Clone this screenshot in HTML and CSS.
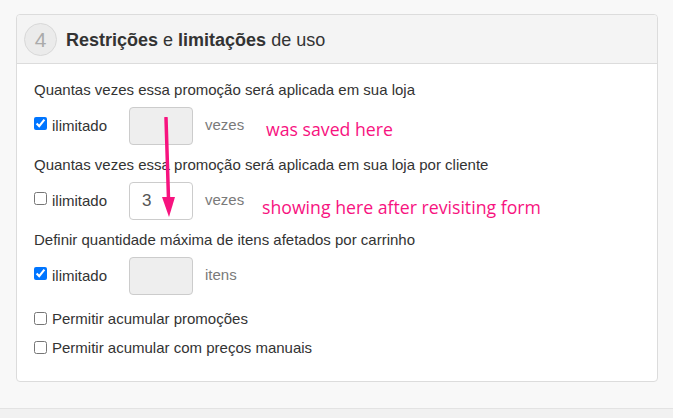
FILE: index.html
```html
<!DOCTYPE html>
<html lang="pt">
<head>
<meta charset="utf-8">
<link rel="stylesheet" href="styles.css">
</head>
<body>
<div class="page">
  <section class="card">
    <header class="card-head">
      <span class="step">4</span>
      <h2 class="title"><b>Restrições</b> e <b>limitações</b> de uso</h2>
    </header>
    <div class="card-body">
      <p class="label">Quantas vezes essa promoção será aplicada em sua loja</p>
      <div class="row">
        <label class="check"><input type="checkbox" checked> ilimitado</label>
        <input class="num" type="text" disabled>
        <span class="unit">vezes</span>
      </div>
      <p class="label">Quantas vezes essa promoção será aplicada em sua loja por cliente</p>
      <div class="row">
        <label class="check"><input type="checkbox"> ilimitado</label>
        <input class="num" type="text" value="3">
        <span class="unit">vezes</span>
      </div>
      <p class="label">Definir quantidade máxima de itens afetados por carrinho</p>
      <div class="row">
        <label class="check"><input type="checkbox" checked> ilimitado</label>
        <input class="num" type="text" disabled>
        <span class="unit">itens</span>
      </div>
      <label class="check opt"><input type="checkbox"> Permitir acumular promoções</label>
      <label class="check opt"><input type="checkbox"> Permitir acumular com preços manuais</label>
    </div>
  </section>
  <div class="note note-saved">was saved here</div>
  <div class="note note-shown">showing here after revisiting form</div>
  <svg class="arrow" width="30" height="110" viewBox="0 0 30 110">
    <line x1="9" y1="1" x2="11.5" y2="82" stroke="#f7137f" stroke-width="3.5" stroke-linecap="round"/>
    <polygon points="5,80 18,80 12,100" fill="#f7137f"/>
  </svg>
</div>
<footer class="foot"></footer>
</body>
</html>
```
FILE: styles.css
```css
* { box-sizing: border-box; }
html, body { margin: 0; padding: 0; }
body {
  background: #f8f8f8;
  font-family: "Liberation Sans", Arial, sans-serif;
  color: #333;
  font-size: 15px;
}
.page {
  position: relative;
  padding: 14px 15px 26px 16px;
}
.card {
  width: 642px;
  background: #fff;
  border: 1px solid #dcdcdc;
  border-radius: 4px;
}
.card-head {
  display: flex;
  align-items: center;
  gap: 9px;
  height: 49px;
  padding: 0 7px;
  background: #f4f4f4;
  border-bottom: 1px solid #dcdcdc;
  border-radius: 4px 4px 0 0;
}
.step {
  width: 33px;
  height: 33px;
  border-radius: 50%;
  border: 1px solid #d8d8d8;
  background: #ebebeb;
  color: #aaaaaa;
  font-size: 21px;
  display: flex;
  align-items: center;
  justify-content: center;
  margin-top: 1px;
}
.title {
  margin: 0;
  font-size: 18px;
  font-weight: normal;
  color: #333;
  margin-top: 2px;
}
.title b { font-weight: bold; }
.card-body {
  padding: 16px 17px 23px;
  display: flex;
  flex-direction: column;
}
.label {
  margin: 0;
  line-height: 20px;
  height: 20px;
}
.row {
  display: flex;
  align-items: center;
  margin: 6px 0 11px;
  height: 38px;
}
.check {
  display: flex;
  align-items: center;
  gap: 5px;
  line-height: 20px;
}
.check input {
  margin: 0;
  width: 13px;
  height: 13px;
  position: relative;
  top: -1px;
}
.row .check { width: 95px; margin-top: 2px; }
.row .check input { top: -3px; }
.num {
  width: 64px;
  height: 38px;
  border: 1px solid #ccc;
  border-radius: 4px;
  background: #fff;
  font-family: "Liberation Sans", Arial, sans-serif;
  font-size: 17px;
  color: #555;
  padding: 0 12px;
  margin-top: 1px;
}
.num:disabled { background: #eeeeee; }
.unit {
  margin-left: 12px;
  color: #7a7a7a;
  margin-top: -2px;
}
.opt { margin-top: 4px; }
.opt + .opt { margin-top: 9px; }
.note {
  position: absolute;
  color: #f7137f;
  font-family: "Open Sans", sans-serif;
  font-size: 17.7px;
  line-height: 20px;
}
.note-saved { left: 266px; top: 119px; }
.note-shown { left: 262px; top: 197px; }
.arrow {
  position: absolute;
  left: 157px;
  top: 117px;
}
.foot {
  border-top: 1px solid #e3e3e3;
  background: #f1f1f1;
  height: 20px;
}
```
